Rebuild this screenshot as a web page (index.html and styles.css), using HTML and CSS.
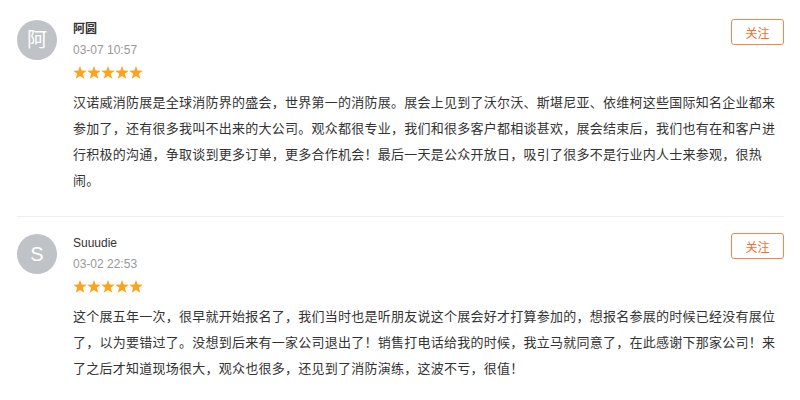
FILE: index.html
```html
<!DOCTYPE html>
<html lang="zh-CN">
<head>
<meta charset="utf-8">
<title>评论</title>
<link rel="stylesheet" href="styles.css">
</head>
<body>
<div class="list">
  <div class="item">
    <div class="avatar">阿</div>
    <div class="main">
      <div class="head">
        <div class="meta">
          <div class="name cjk">阿圆</div>
          <div class="date">03-07 10:57</div>
          <svg class="stars" width="70" height="13" viewBox="0 0 70 13">
            <g fill="#fda41e">
              <polygon points="7,0 8.7,4.6 13.8,4.8 9.8,7.8 11.3,12.8 7,9.9 2.7,12.8 4.2,7.8 0.2,4.8 5.3,4.6"/>
              <polygon transform="translate(14 0)" points="7,0 8.7,4.6 13.8,4.8 9.8,7.8 11.3,12.8 7,9.9 2.7,12.8 4.2,7.8 0.2,4.8 5.3,4.6"/>
              <polygon transform="translate(28 0)" points="7,0 8.7,4.6 13.8,4.8 9.8,7.8 11.3,12.8 7,9.9 2.7,12.8 4.2,7.8 0.2,4.8 5.3,4.6"/>
              <polygon transform="translate(42 0)" points="7,0 8.7,4.6 13.8,4.8 9.8,7.8 11.3,12.8 7,9.9 2.7,12.8 4.2,7.8 0.2,4.8 5.3,4.6"/>
              <polygon transform="translate(56 0)" points="7,0 8.7,4.6 13.8,4.8 9.8,7.8 11.3,12.8 7,9.9 2.7,12.8 4.2,7.8 0.2,4.8 5.3,4.6"/>
            </g>
          </svg>
        </div>
        <button class="follow">关注</button>
      </div>
      <p class="text">汉诺威消防展是全球消防界的盛会，世界第一的消防展。展会上见到了沃尔沃、斯堪尼亚、依维柯这些国际知名企业都来参加了，还有很多我叫不出来的大公司。观众都很专业，我们和很多客户都相谈甚欢，展会结束后，我们也有在和客户进行积极的沟通，争取谈到更多订单，更多合作机会！最后一天是公众开放日，吸引了很多不是行业内人士来参观，很热闹。</p>
    </div>
  </div>
  <div class="item">
    <div class="avatar">S</div>
    <div class="main">
      <div class="head">
        <div class="meta">
          <div class="name">Suuudie</div>
          <div class="date">03-02 22:53</div>
          <svg class="stars" width="70" height="13" viewBox="0 0 70 13">
            <g fill="#fda41e">
              <polygon points="7,0 8.7,4.6 13.8,4.8 9.8,7.8 11.3,12.8 7,9.9 2.7,12.8 4.2,7.8 0.2,4.8 5.3,4.6"/>
              <polygon transform="translate(14 0)" points="7,0 8.7,4.6 13.8,4.8 9.8,7.8 11.3,12.8 7,9.9 2.7,12.8 4.2,7.8 0.2,4.8 5.3,4.6"/>
              <polygon transform="translate(28 0)" points="7,0 8.7,4.6 13.8,4.8 9.8,7.8 11.3,12.8 7,9.9 2.7,12.8 4.2,7.8 0.2,4.8 5.3,4.6"/>
              <polygon transform="translate(42 0)" points="7,0 8.7,4.6 13.8,4.8 9.8,7.8 11.3,12.8 7,9.9 2.7,12.8 4.2,7.8 0.2,4.8 5.3,4.6"/>
              <polygon transform="translate(56 0)" points="7,0 8.7,4.6 13.8,4.8 9.8,7.8 11.3,12.8 7,9.9 2.7,12.8 4.2,7.8 0.2,4.8 5.3,4.6"/>
            </g>
          </svg>
        </div>
        <button class="follow">关注</button>
      </div>
      <p class="text">这个展五年一次，很早就开始报名了，我们当时也是听朋友说这个展会好才打算参加的，想报名参展的时候已经没有展位了，以为要错过了。没想到后来有一家公司退出了！销售打电话给我的时候，我立马就同意了，在此感谢下那家公司！来了之后才知道现场很大，观众也很多，还见到了消防演练，这波不亏，很值！</p>
    </div>
  </div>
</div>
</body>
</html>
```

FILE: styles.css
```css
* { box-sizing: border-box; }
html, body { margin: 0; padding: 0; background: #fff; }
body {
  font-family: "Liberation Sans", "Noto Sans CJK SC", sans-serif;
  color: #333;
}
.list {
  padding: 3px 16px 0 17px;
}
.item {
  display: flex;
  gap: 16px;
  padding: 17px 0 23px;
  border-bottom: 1px solid #eeeeee;
}
.item:last-child { border-bottom: none; }
.avatar {
  flex: 0 0 40px;
  width: 40px;
  height: 40px;
  border-radius: 50%;
  background: #bfc3c7;
  color: #fff;
  font-size: 20px;
  line-height: 40px;
  text-align: center;
  font-family: "Liberation Sans", "Noto Sans CJK SC", sans-serif;
}
.main { flex: 1; min-width: 0; }
.head {
  display: flex;
  justify-content: space-between;
  align-items: flex-start;
}
.meta { display: flex; flex-direction: column; }
.name {
  font-size: 12px;
  line-height: 18px;
  color: #333;
}
.name.cjk { font-weight: 700; }
.date {
  margin-top: 3px;
  font-size: 12px;
  line-height: 18px;
  color: #999;
}
.stars {
  display: block;
  margin-top: 7px;
}
.follow {
  margin-top: -1px;
  width: 53px;
  height: 26px;
  padding: 0;
  border: 1px solid #f3844b;
  border-radius: 3px;
  background: #fff;
  color: #f06f2e;
  font-size: 12px;
  font-family: "Noto Sans CJK SC", sans-serif;
  cursor: pointer;
}
.text {
  margin: 10px 0 0;
  font-size: 13px;
  letter-spacing: 0.25px;
  line-height: 26px;
  color: #333;
  font-family: "Noto Sans CJK SC", sans-serif;
  text-spacing-trim: space-all;
}
```
